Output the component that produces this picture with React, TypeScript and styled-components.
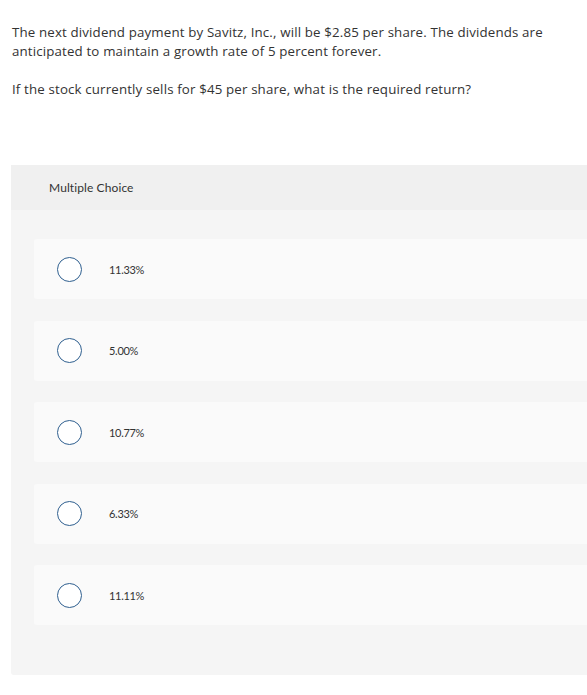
import * as React from 'react';
import styled, { createGlobalStyle } from 'styled-components';

const GlobalStyle = createGlobalStyle`
    html, body {
        margin: 0;
        padding: 0;
        background: #ffffff;
        overflow-x: hidden;
    }
    body {
        font-family: Lato, "Open Sans", sans-serif;
        color: #333333;
    }
`;

const Page = styled.div`
    padding: 23px 0 0 12px;
`;

const Question = styled.div`
    display: flex;
    flex-direction: column;
    gap: 19px;
    font-family: "Open Sans", Lato, sans-serif;
    font-size: 13.3px;
    letter-spacing: 0.15px;
    line-height: 19px;
    color: #333333;
    padding-right: 30px;
`;

const Paragraph = styled.p`
    margin: 0;
`;

const Panel = styled.div`
    margin: 66px -40px 0 -1px;
    background: #f5f5f5;
    border-radius: 3px;
    padding-bottom: 50px;
`;

const PanelHeader = styled.div`
    height: 45px;
    background: #f0f0f0;
    display: flex;
    align-items: center;
    padding-left: 38px;
    font-size: 12px;
    letter-spacing: 0.1px;
    color: #333333;
    margin-bottom: 29px;
`;

const Options = styled.div`
    display: flex;
    flex-direction: column;
    gap: 21.5px;
    padding-left: 23px;
`;

const OptionCard = styled.label`
    height: 60px;
    background: #fafafa;
    border-radius: 3px;
    display: flex;
    align-items: center;
    padding-left: 23px;
    cursor: pointer;
`;

const Radio = styled.span`
    width: 23px;
    height: 23px;
    border: 1.5px solid #2f5f8f;
    border-radius: 50%;
    background: #ffffff;
    flex-shrink: 0;
`;

const OptionText = styled.span`
    margin-left: 27px;
    font-size: 11px;
    letter-spacing: -0.3px;
    color: #333333;
`;

const choices = ['11.33%', '5.00%', '10.77%', '6.33%', '11.11%'];

export default function App() {
    return (
        <>
            <GlobalStyle />
            <Page>
                <Question>
                    <Paragraph>
                        The next dividend payment by Savitz, Inc., will be $2.85 per share. The dividends are
                        anticipated to maintain a growth rate of 5 percent forever.
                    </Paragraph>
                    <Paragraph>If the stock currently sells for $45 per share, what is the required return?</Paragraph>
                </Question>
                <Panel>
                    <PanelHeader>Multiple Choice</PanelHeader>
                    <Options>
                        {choices.map(choice => (
                            <OptionCard key={choice}>
                                <Radio />
                                <OptionText>{choice}</OptionText>
                            </OptionCard>
                        ))}
                    </Options>
                </Panel>
            </Page>
        </>
    );
}
